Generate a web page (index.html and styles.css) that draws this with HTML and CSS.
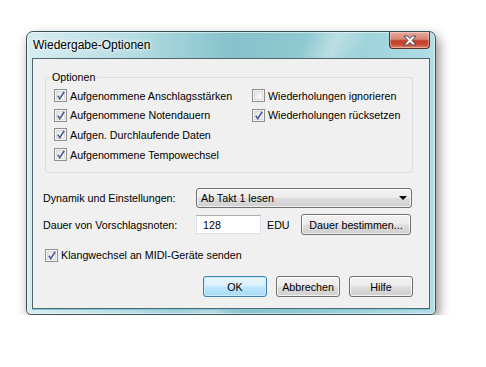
FILE: index.html
```html
<!DOCTYPE html>
<html lang="de">
<head>
<meta charset="utf-8">
<title>Wiedergabe-Optionen</title>
<link rel="stylesheet" href="styles.css">
</head>
<body>
<div class="stage">
  <div class="window">
    <div class="titlebar">
      <span class="title">Wiedergabe-Optionen</span>
      <div class="close">
        <svg width="16" height="11" viewBox="0 0 16 11"><path d="M2 1 H5.5 L8 3.6 L10.5 1 H14 L10 5.5 L14 10 H10.5 L8 7.4 L5.5 10 H2 L6 5.5 Z" fill="#ffffff" stroke="#4a4a5a" stroke-width="1" stroke-linejoin="round"/></svg>
      </div>
    </div>
    <div class="client">
      <fieldset class="group">
        <legend>Optionen</legend>
        <div class="grid">
          <label class="cb"><span class="box checked"></span>Aufgenommene Anschlagsstärken</label>
          <label class="cb"><span class="box"></span>Wiederholungen ignorieren</label>
          <label class="cb"><span class="box checked"></span>Aufgenommene Notendauern</label>
          <label class="cb"><span class="box checked"></span>Wiederholungen rücksetzen</label>
          <label class="cb"><span class="box checked"></span>Aufgen. Durchlaufende Daten</label>
          <span></span>
          <label class="cb"><span class="box checked"></span>Aufgenommene Tempowechsel</label>
        </div>
      </fieldset>
      <div class="row row-dyn">
        <span class="lbl">Dynamik und Einstellungen:</span>
        <div class="select">Ab Takt 1 lesen<span class="arrow"></span></div>
      </div>
      <div class="row row-dur">
        <span class="lbl">Dauer von Vorschlagsnoten:</span>
        <div class="input">128</div>
        <span class="unit">EDU</span>
        <div class="btn btn-wide">Dauer bestimmen...</div>
      </div>
      <label class="cb cb-midi"><span class="box checked"></span>Klangwechsel an MIDI-Geräte senden</label>
      <div class="actions">
        <div class="btn default">OK</div>
        <div class="btn">Abbrechen</div>
        <div class="btn">Hilfe</div>
      </div>
    </div>
  </div>
</div>
</body>
</html>
```
FILE: styles.css
```css
html, body {
  margin: 0;
  padding: 0;
  background: #ffffff;
  font-family: "Liberation Sans", Arial, sans-serif;
  font-size: 10.7px;
  color: #000;
}
.stage {
  padding: 31px 0 0 26px;
}
.window {
  box-sizing: border-box;
  width: 410px;
  height: 284px;
  border: 1px solid #3b4e56;
  border-radius: 7px 7px 5px 5px;
  background:
    linear-gradient(115deg, rgba(255,255,255,0) 0%, rgba(255,255,255,0) 52%, rgba(255,255,255,0.35) 58%, rgba(255,255,255,0) 64%, rgba(255,255,255,0) 100%),
    linear-gradient(90deg, #d8ecf0 0%, #b6dde4 25%, #86c2cb 50%, #90c9d2 70%, #b2dee5 100%);
  box-shadow: 3px 5px 12px rgba(0,0,0,0.45), inset 0 0 0 1px rgba(255,255,255,0.55);
  padding: 0 5px 5px 5px;
  display: flex;
  flex-direction: column;
}
.titlebar {
  height: 26px;
  display: flex;
  justify-content: space-between;
  align-items: flex-start;
}
.title {
  font-size: 12px;
  padding: 6px 0 0 1px;
  text-shadow: 0 0 6px rgba(255,255,255,0.95), 0 0 3px rgba(255,255,255,0.9);
}
.close {
  width: 41px;
  height: 17px;
  box-sizing: border-box;
  border: 1px solid #5f3028;
  border-top: none;
  border-radius: 0 0 4px 4px;
  background: linear-gradient(180deg, #e8aa9c 0%, #d78474 45%, #c0402b 55%, #c94a35 80%, #e08a70 100%);
  box-shadow: inset 0 0 0 1px rgba(255,255,255,0.35);
  display: flex;
  align-items: center;
  justify-content: center;
}
.client {
  flex: 1;
  background: #f0f0f0;
  border: 1px solid #4f656d;
  position: relative;
  box-shadow: 0 1px 0 #7fcbd8;
}
.group {
  margin: 12px 16px 0 12px;
  padding: 2px 0 8px 8px;
  border: 1px solid #d5dfe5;
  border-radius: 3px;
  height: 102px;
  box-sizing: border-box;
}
.group legend {
  padding: 0 2px;
  margin-left: -4px;
  font-size: 10.7px;
  line-height: 13px;
}
.grid {
  display: grid;
  grid-template-columns: 198px 1fr;
  grid-auto-rows: 19.6px;
  align-items: center;
}
.cb {
  display: flex;
  align-items: center;
  white-space: nowrap;
}
.box {
  width: 13px;
  height: 13px;
  box-sizing: border-box;
  border: 1px solid #8e8f8f;
  background: linear-gradient(135deg, #dcdcdc 0%, #f4f4f4 60%, #ffffff 100%);
  box-shadow: inset 0 0 0 1px #f4f4f4, inset 0 0 0 2px #dadada;
  margin-right: 3px;
  flex: none;
  position: relative;
}
.box.checked::after {
  content: "";
  position: absolute;
  left: 2px;
  top: 1px;
  width: 8px;
  height: 9px;
  background: url("data:image/svg+xml;utf8,<svg xmlns='http://www.w3.org/2000/svg' width='8' height='9' viewBox='0 0 8 9'><path d='M0.8 4.8 L2.8 7.6 L7.2 0.8' fill='none' stroke='%234a5d98' stroke-width='1.6'/></svg>") no-repeat;
}
.row {
  display: flex;
  align-items: center;
  margin-left: 10px;
}
.lbl {
  width: 153px;
}
.row-dyn {
  margin-top: 15px;
  height: 20px;
}
.select {
  box-sizing: border-box;
  width: 216px;
  height: 20px;
  border: 1px solid #707070;
  border-radius: 3px;
  background: linear-gradient(180deg, #f2f2f2 0%, #ebebeb 48%, #dddddd 52%, #cfcfcf 100%);
  box-shadow: inset 0 0 0 1px rgba(255,255,255,0.7);
  padding-left: 4px;
  display: flex;
  align-items: center;
  position: relative;
}
.arrow {
  position: absolute;
  right: 4px;
  top: 7px;
  width: 0;
  height: 0;
  border-left: 4px solid transparent;
  border-right: 4px solid transparent;
  border-top: 4px solid #000;
}
.row-dur {
  margin-top: 6px;
  height: 21px;
}
.input {
  box-sizing: border-box;
  width: 65px;
  height: 19px;
  border: 1px solid #dde3e9;
  border-top-color: #abadb3;
  background: #fff;
  padding-left: 6px;
  display: flex;
  align-items: center;
}
.unit {
  margin-left: 6px;
  width: 34px;
}
.btn {
  box-sizing: border-box;
  width: 64px;
  height: 21px;
  border: 1px solid #707070;
  border-radius: 3px;
  background: linear-gradient(180deg, #f2f2f2 0%, #ebebeb 48%, #dddddd 52%, #cfcfcf 100%);
  box-shadow: inset 0 0 0 1px rgba(255,255,255,0.75);
  display: flex;
  align-items: center;
  justify-content: center;
}
.btn-wide {
  width: 110px;
}
.btn.default {
  border-color: #3c7fb1;
  background: linear-gradient(180deg, #eaf6fd 0%, #d9f0fc 48%, #bee6fd 52%, #a7d9f5 100%);
  box-shadow: inset 0 0 0 1px #c8ecfc;
}
.cb-midi {
  margin: 13px 0 0 12px;
  height: 14px;
}
.actions {
  display: flex;
  justify-content: flex-end;
  gap: 9px;
  margin: 14px 16px 0 0;
}
```
